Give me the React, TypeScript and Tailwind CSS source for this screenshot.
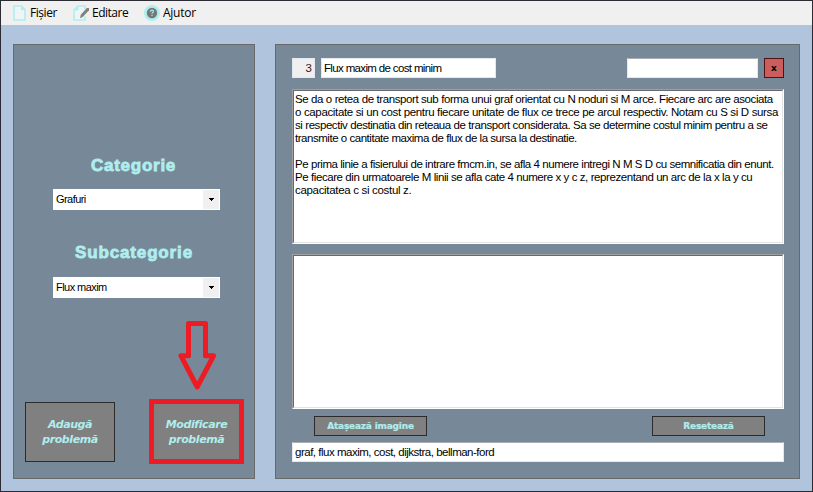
import type { ReactNode } from "react";

const problemLines = [
  { text: "Se da o retea de transport sub forma unui graf orientat cu N noduri si M arce. Fiecare arc are asociata", cls: "tracking-[-0.4px]" },
  { text: "o capacitate si un cost pentru fiecare unitate de flux ce trece pe arcul respectiv. Notam cu S si D sursa", cls: "tracking-[-0.347px]" },
  { text: "si respectiv destinatia din reteaua de transport considerata. Sa se determine costul minim pentru a se", cls: "tracking-[-0.425px]" },
  { text: "transmite o cantitate maxima de flux de la sursa la destinatie.", cls: "tracking-[-0.468px]" },
  { text: "\u00a0", cls: "" },
  { text: "Pe prima linie a fisierului de intrare fmcm.in, se afla 4 numere intregi N M S D cu semnificatia din enunt.", cls: "tracking-[-0.443px]" },
  { text: "Pe fiecare din urmatoarele M linii se afla cate 4 numere x y c z, reprezentand un arc de la x la y cu", cls: "tracking-[-0.421px]" },
  { text: "capacitatea c si costul z.", cls: "tracking-[-0.316px]" },
];

function Heading({ children, className }: { children: ReactNode; className: string }) {
  return (
    <h2 className={`text-center font-['Liberation_Sans',Arial,sans-serif] text-[17px] leading-[20px] font-bold whitespace-nowrap text-[#afeeee] [-webkit-text-stroke:0.8px_#afeeee] ${className}`}>
      {children}
    </h2>
  );
}

function Combo({ value, className }: { value: string; className: string }) {
  return (
    <div className={`ml-[39px] flex h-[21px] w-[167px] bg-white p-px ${className}`}>
      <span className="flex-1 pl-[2px] leading-[18px] tracking-[-0.55px]">{value}</span>
      <span className="flex w-4 items-center justify-center bg-[#f0f0f0]">
        <svg width="5" height="3" viewBox="0 0 5 3" shapeRendering="crispEdges">
          <path d="M0 0h5v1h-1v1h-1v1h-1v-1h-1v-1h-1z" fill="#000" />
        </svg>
      </span>
    </div>
  );
}

function SmallButton({ children }: { children: ReactNode }) {
  return (
    <button className="h-5 w-[113px] border border-[#2b2b2b] bg-[#808080] font-['DejaVu_Sans',Verdana,sans-serif] text-[9px] leading-[19px] font-bold tracking-[-0.2px] whitespace-nowrap text-[#afeeee] [-webkit-text-stroke:0.2px_#afeeee]">
      {children}
    </button>
  );
}

const bigText = "font-['DejaVu_Sans',Verdana,sans-serif] text-[11px] leading-[15px] font-bold italic tracking-[-0.4px] text-[#afeeee]";
const sunken = "border border-t-[#a0a0a0] border-l-[#a0a0a0] border-r-white border-b-white";
const sunkenInner = "h-full border border-t-[#696969] border-l-[#696969] border-r-[#e3e3e3] border-b-[#e3e3e3] bg-white";

export default function App() {
  return (
    <div className="flex h-[492px] w-[813px] flex-col overflow-hidden border border-[#2b2b33] bg-[#b0c4de] font-['Liberation_Sans',Arial,sans-serif] text-[11px] text-black">
      <nav className="flex h-6 shrink-0 bg-[#f0f0f0] pl-3 font-['Open_Sans','Segoe_UI',sans-serif] text-[12px] leading-[23px]">
        <div className="flex w-[60px] items-start">
          <svg className="mt-1 mr-[4px]" width="13" height="16" viewBox="0 0 13 16">
            <path d="M1 1h7.500L12 4.500V15H1z" fill="#f0f4f4" stroke="#afeeee" strokeWidth="1.6" />
            <path d="M8 1v4h4z" fill="#afeeee" />
          </svg>
          <span className="tracking-[-0.45px]">Fișier</span>
        </div>
        <div className="flex w-[71px] items-start">
          <svg className="mt-1 mr-[3px]" width="16" height="16" viewBox="0 0 16 16">
            <path d="M12 11v4H1V5l4-4h7v3" fill="#f0f4f4" stroke="#afeeee" strokeWidth="1.6" />
            <path d="M1 5.500h4.500V1z" fill="#afeeee" />
            <path d="M7 13.300l.8-3.600L13.800 3h2.200v2.300l-6.300 6.700z" fill="#808080" />
          </svg>
          <span className="tracking-[-0.5px]">Editare</span>
        </div>
        <div className="flex items-start">
          <svg className="mt-1 mr-[3px]" width="16" height="16" viewBox="0 0 16 16">
            <circle cx="8" cy="8" r="8" fill="#afeeee" />
            <circle cx="8" cy="8" r="5.2" fill="#777" />
            <path d="M6.300 6.700C6.400 4.500 9.700 4.700 9.500 6.500C9.400 7.500 8 7.400 8 8.700M8 9.800v1.200" fill="none" stroke="#afeeee" strokeWidth="1.1" />
          </svg>
          <span className="tracking-[-0.25px]">Ajutor</span>
        </div>
      </nav>
      <main className="flex gap-5 px-3 pt-[19px]">
        <section className="flex h-[435px] w-[242px] flex-col border border-[#696969] bg-[#778899]">
          <Heading className="mt-[111px] -ml-px tracking-[0.75px]">Categorie</Heading>
          <Combo value="Grafuri" className="mt-[13px]" />
          <Heading className="mt-[33px] tracking-[0.85px]">Subcategorie</Heading>
          <Combo value="Flux maxim" className="mt-[14px]" />
          <svg className="mt-[23px] ml-[164px] shrink-0" width="39" height="69" viewBox="0 0 39 69">
            <path d="M10.500 2.500h17v32.300h8L19.200 66L3 34.800h7.500z" fill="none" stroke="#ed1c24" strokeWidth="5" strokeLinejoin="round" />
          </svg>
          <div className="mt-[9px] flex items-start pl-[11px]">
            <button className={`mt-[3px] h-[60px] w-[90px] border border-[#2b2b2b] bg-[#808080] ${bigText}`}>
              Adaugă<br />problemă
            </button>
            <button className={`ml-[34px] h-[65px] w-[95px] border-[5px] border-[#ed1c24] bg-[#808080] ${bigText}`}>
              Modificare<br />problemă
            </button>
          </div>
        </section>
        <section className="flex h-[435px] w-[525px] flex-col border border-[#696969] bg-[#778899] pt-[13px] pr-[15px] pl-4">
          <div className="flex h-5 shrink-0 text-[11.5px] leading-[18px]">
            <div className="w-[23px] border border-[#e3e9ef] bg-[#f0f0f0] pr-[2px] text-right text-[#4a1010]">3</div>
            <div className="ml-[6px] w-[175px] border border-[#e3e9ef] bg-white pl-[2px] tracking-[-0.65px]">Flux maxim de cost minim</div>
            <div className="ml-[131px] w-[131px] border border-[#e3e9ef] border-t-[#abadb3] bg-white" />
            <button className="ml-[6px] w-5 border border-[#4a1414] bg-[#cd5c5c] font-['DejaVu_Sans',Verdana,sans-serif] text-[9px] leading-[17px] font-bold">x</button>
          </div>
          <div className={`mt-[11px] h-[155px] w-[492px] shrink-0 ${sunken}`}>
            <div className={`${sunkenInner} pt-[2px] pl-px text-[11.5px]`}>
              {problemLines.map((l, i) => (
                <div key={i} className="h-[13px] leading-[13px] whitespace-nowrap">
                  <span className={l.cls}>{l.text}</span>
                </div>
              ))}
            </div>
          </div>
          <div className={`mt-[10px] h-[155px] w-[492px] shrink-0 ${sunken}`}>
            <div className={sunkenInner} />
          </div>
          <div className="mt-[7px] flex shrink-0 justify-between pr-[19px] pl-[22px]">
            <SmallButton>Atașează imagine</SmallButton>
            <SmallButton>Resetează</SmallButton>
          </div>
          <div className="mt-[6px] h-5 w-[492px] shrink-0 border border-[#e3e9ef] border-t-[#abadb3] bg-white pl-[2px] text-[11.5px] leading-[18px] tracking-[-0.49px]">
            <span>graf, flux maxim, cost, dijkstra, bellman-ford</span>
          </div>
        </section>
      </main>
    </div>
  );
}
